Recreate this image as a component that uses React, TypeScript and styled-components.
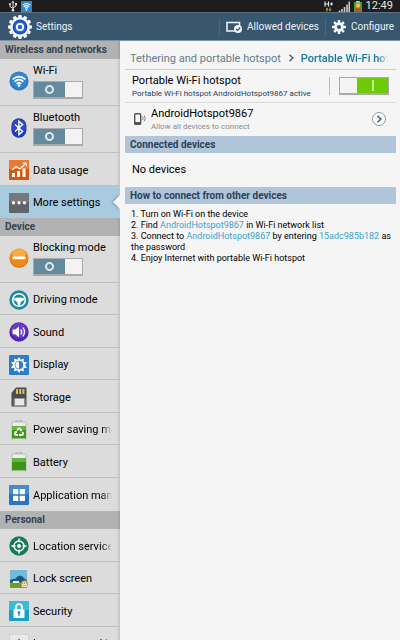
import React from "react";
import styled, { createGlobalStyle, css } from "styled-components";

const GlobalStyle = createGlobalStyle`
  * { box-sizing: border-box; }
  html, body { margin: 0; background: #f5f5f5; }
  body { font-family: Roboto, "Noto Sans", sans-serif; color: #000; overflow: hidden; }
  button, input { font: inherit; margin: 0; padding: 0; }
  a { color: inherit; text-decoration: none; }
  svg { display: block; flex: none; }
`;

const Screen = styled.div`
  display: flex;
  flex-direction: column;
  height: 100vh;
`;

const StatusBar = styled.div`
  display: flex;
  align-items: center;
  gap: 4px;
  height: 12px;
  padding: 0 7px 0 9px;
  background: #1d1d1d;
  color: #e4e4e4;
  font-size: 11px;
  line-height: 12px;
`;

const Spacer = styled.div`
  flex: 1;
`;

const ActionBar = styled.header`
  display: flex;
  align-items: center;
  height: 29px;
  padding-left: 8px;
  background: #39566f;
  border-top: 1px solid #5a7287;
  border-bottom: 1px solid #8094a6;
  color: #eef2f5;
`;

const Title = styled.h1`
  flex: 1;
  margin: 0 0 0 4px;
  font-size: 10px;
  font-weight: 400;
`;

const Action = styled.button`
  display: flex;
  align-items: center;
  gap: 5px;
  height: 18px;
  padding: 0 6px;
  border: 0;
  border-left: 1px solid #4b677f;
  background: none;
  color: inherit;
  font-size: 10px;
`;

const Body = styled.div`
  display: flex;
  flex: 1;
  min-height: 0;
`;

const Sidebar = styled.nav`
  width: 30%;
  flex: none;
  overflow: hidden;
  background: linear-gradient(to right, #dcdcdc 97%, #c4c4c4);
`;

const GroupTitle = styled.h2`
  height: 18px;
  margin: 0;
  padding-left: 5px;
  background: linear-gradient(to right, #b2b2b2 97%, #9f9f9f);
  color: #33434f;
  font-size: 10px;
  font-weight: 700;
  line-height: 18px;
`;

const Group = styled.ul`
  margin: 0;
  padding: 0;
  list-style: none;
`;

const Item = styled.li<{ $selected?: boolean; $tall?: boolean }>`
  position: relative;
  display: flex;
  align-items: center;
  gap: 4px;
  height: 32px;
  padding: 2px 8px 0 9px;
  border-bottom: 1px solid #c0c0c0;
  &:nth-child(odd), &:nth-child(8) { height: 33px; }
  &:last-child { border-bottom-color: transparent; }
  ${(p) => p.$tall && css`
    &&, &&:nth-child(odd) { height: 47px; padding-top: 0; padding-bottom: 2px; }
  `}
  ${(p) => p.$selected && css`
    background: #a9cbe0;
    &::after {
      content: "";
      position: absolute;
      right: 0;
      top: 9px;
      border: 7px solid transparent;
      border-left-width: 0;
      border-right-color: #f5f5f5;
      filter: drop-shadow(-1px 0 1px #6f8b9c);
    }
  `}
`;

const ItemText = styled.div`
  display: flex;
  flex: 1;
  min-width: 0;
  flex-direction: column;
  align-items: flex-start;
  gap: 3px;
`;

const fade = css`
  overflow: hidden;
  white-space: nowrap;
  mask-image: linear-gradient(to left, transparent, #000 10px);
`;

const ItemLink = styled.a<{ $fade?: boolean }>`
  max-width: 100%;
  font-size: 11px;
  line-height: 15px;
  white-space: nowrap;
  ${(p) => p.$fade && fade}
`;

const Switch = styled.input`
  appearance: none;
  display: flex;
  flex: none;
  width: 50px;
  height: 18px;
  border: 1px solid #a9a9a9;
  border-width: 1px 1px 2px;
  background: #f3f3f3;
  &::before {
    content: "";
    width: 31px;
    background:
      radial-gradient(circle at center, transparent 2px, #dbe6ec 3px, #dbe6ec 4px, transparent 5px),
      #648a9e;
  }
  &:checked { justify-content: flex-end; }
  &:checked::before {
    background:
      linear-gradient(#c4f28c, #c4f28c) center / 2px 11px no-repeat,
      #6ccb06;
  }
`;

const Main = styled.main`
  flex: 1;
  min-width: 0;
  padding: 0 4px 0 5px;
  background: #f5f5f5;
`;

const Crumbs = styled.div`
  display: flex;
  align-items: center;
  gap: 6px;
  height: 29px;
  padding: 6px 8px 0 5px;
  border-bottom: 1px solid #c3d1d3;
  color: #647d89;
  font-size: 11px;
`;

const Crumb = styled.a`
  flex: none;
`;

const CurrentCrumb = styled.span`
  flex: 1;
  color: #1677a5;
  font-weight: 500;
  ${fade}
`;

const Row = styled.div<{ $last?: boolean }>`
  display: flex;
  align-items: center;
  height: 33px;
  padding: 0 7px;
  border-bottom: 1px solid ${(p) => (p.$last ? "transparent" : "#dcdcdc")};
`;

const RowText = styled.div<{ $inset?: boolean }>`
  display: flex;
  flex: 1;
  min-width: 0;
  flex-direction: column;
  padding-left: ${(p) => (p.$inset ? 5 : 0)}px;
`;

const RowTitle = styled.label`
  font-size: 11px;
  line-height: 14px;
  white-space: nowrap;
`;

const RowNote = styled.span<{ $muted?: boolean }>`
  color: ${(p) => (p.$muted ? "#8b8b8b" : "#27425e")};
  font-size: 8px;
  line-height: 11px;
  white-space: nowrap;
`;

const Rule = styled.div`
  width: 1px;
  height: 18px;
  margin-right: 9px;
  background: #bdbdbd;
`;

const Round = styled.button`
  display: grid;
  place-items: center;
  width: 14px;
  height: 14px;
  margin-right: 3px;
  border: 1px solid #8d989e;
  border-radius: 50%;
  background: #fafafa;
`;

const Band = styled.h2`
  height: 17px;
  margin: 0;
  padding-left: 5px;
  background: #b1c5da;
  color: #2b4155;
  font-size: 10px;
  font-weight: 700;
  line-height: 18px;
`;

const Empty = styled.p`
  margin: 0;
  padding-left: 7px;
  font-size: 11px;
  line-height: 34px;
`;

const Steps = styled.ol`
  margin: 0;
  padding: 5px 0 0 6px;
  font-size: 9px;
  line-height: 11px;
  list-style: none;
`;

const Key = styled.span`
  color: #3ba3cf;
`;

const Gear = ({ size, blue }: { size: number; blue?: boolean }) => (
  <svg width={size} height={size} viewBox="-12 -12 24 24" aria-hidden="true">
    {Array.from({ length: blue ? 12 : 8 }, (_, i) => (
      <rect key={i} x={blue ? -1.8 : -2.2} y="-12" width={blue ? 3.6 : 4.4} height="6" rx="1"
        fill="#f3f6f8" transform={`rotate(${i * (blue ? 30 : 45)})`} />
    ))}
    {blue ? (
      <>
        <circle r="10" fill="#f3f6f8" />
        <circle r="7.4" fill="#1c4fc0" />
        <circle r="5.6" fill="#2f66df" />
        <circle r="3.2" fill="none" stroke="#fff" strokeWidth="1.7" />
      </>
    ) : (
      <circle r="5.9" fill="none" stroke="#f3f6f8" strokeWidth="4.6" />
    )}
  </svg>
);

const drawings: Record<string, React.ReactNode> = {
  wifi: (
    <>
      <circle cx="10" cy="10" r="9.6" fill="#2b7ac6" />
      <circle cx="10" cy="9" r="8" fill="#3d8ed8" opacity=".6" />
      <g fill="none" stroke="#fff" strokeWidth="1.6">
        <path d="M3.6 8.3Q10 2.8 16.4 8.3M5.6 10.6Q10 6.8 14.4 10.6M7.6 12.8Q10 10.8 12.4 12.8" />
      </g>
      <circle cx="10" cy="14.6" r="1.3" fill="#fff" />
    </>
  ),
  bluetooth: (
    <>
      <rect x="2.4" y="0.2" width="15" height="19.6" rx="7.5" fill="#2338b4" />
      <rect x="3.4" y="1" width="13" height="15" rx="6.5" fill="#3b55d2" opacity=".6" />
      <path d="M6 6.5l7.6 7-3.7 3.2V3.3l3.7 3.2-7.6 7" fill="none" stroke="#fff" strokeWidth="1.4" />
    </>
  ),
  data: (
    <>
      <rect width="20" height="20" rx="1" fill="#d9560f" />
      <rect width="20" height="9" rx="1" fill="#ec7a35" />
      <path d="M3 10l4-3.5 4 2.5 6-6" fill="none" stroke="#fff" strokeWidth="1.2" />
      <path d="M14 3h3.3v3.3" fill="none" stroke="#fff" />
      <path d="M3 17v-4h3v4zM8 17v-6h3v6zM13.5 17V8.5h3V17z" fill="#fff" />
    </>
  ),
  more: (
    <>
      <rect width="20" height="20" rx="1" fill="#626369" />
      <rect width="20" height="9" rx="1" fill="#77787d" />
      <g fill="#fff">
        <circle cx="4.5" cy="9.7" r="1.7" />
        <circle cx="10" cy="9.7" r="1.7" />
        <circle cx="15.5" cy="9.7" r="1.7" />
      </g>
    </>
  ),
  blocking: (
    <>
      <circle cx="10" cy="10.4" r="9.4" fill="#b56708" />
      <circle cx="10" cy="9.7" r="9.2" fill="#f18a15" />
      <ellipse cx="10" cy="5.6" rx="7" ry="4.5" fill="#fbb14b" opacity=".8" />
      <rect x="3.5" y="8.5" width="13" height="2.8" rx="1" fill="#fff" />
    </>
  ),
  driving: (
    <>
      <circle cx="10" cy="10" r="9.7" fill="#198aa0" />
      <circle cx="10" cy="10" r="6.3" fill="none" stroke="#fff" strokeWidth="1.6" />
      <path d="M4.5 8.5Q10 6.5 15.5 8.5L14.5 10.5Q11.5 11 11 15.500H9Q8.500 11 5.500 10.500Z" fill="#fff" />
    </>
  ),
  sound: (
    <>
      <circle cx="10" cy="10" r="9.7" fill="#5126b4" />
      <circle cx="10" cy="8.5" r="7.5" fill="#7a4ade" opacity=".6" />
      <path d="M3.6 7.6h2.7L10 4.6v10.6l-3.7-3H3.6z" fill="#fff" />
      <path d="M11.8 7.3q1.7 2.6 0 5.2M14 5.5q3 4.4 0 8.8" fill="none" stroke="#fff" strokeWidth="1.3" />
    </>
  ),
  display: (
    <>
      <rect width="20" height="20" rx="1" fill="#2f7cc6" />
      <path d="M10 2l1.7 2.8 3.1-1.2-.2 3.3 3.4.4-2 2.7 2 2.7-3.4.4.2 3.3-3.1-1.2L10 18l-1.7-2.8-3.1 1.2.2-3.3-3.4-.4 2-2.7-2-2.7 3.4-.4-.2-3.3 3.1 1.2z" fill="#fff" />
      <path d="M10 6a4 4 0 0 1 0 8z" fill="#2f7cc6" />
      <circle cx="10" cy="10" r="4" fill="none" stroke="#2f7cc6" strokeWidth=".7" />
    </>
  ),
  storage: (
    <>
      <path d="M7 .5h10.5v19H2.5V6z" fill="#4b4b4d" />
      <path d="M7 2h2v5H7zM10.2 2h2v5h-2zM13.4 2h2v5h-2z" fill="#dcc24a" />
      <path d="M5.5 11.5h10v7h-10z" fill="#e9e9e9" />
      <path d="M4.5 11.5H6v8H4.5zM15 11.5h1.5v8H15z" fill="#8b8b8b" />
    </>
  ),
  battery: (
    <>
      <rect x="7" y="0" width="6" height="3" fill="#c9cdd0" stroke="#999" strokeWidth=".5" />
      <rect x="3" y="2" width="14" height="18" rx="1" fill="#eceeee" stroke="#a3a8a6" strokeWidth=".6" />
      <rect x="3" y="6" width="14" height="12.5" fill="#3d9417" />
      <rect x="3" y="6" width="14" height="4" fill="#63b637" />
    </>
  ),
  apps: (
    <>
      <rect width="20" height="20" rx="1" fill="#2d74be" />
      <rect width="20" height="9" rx="1" fill="#468ad0" />
      <path d="M4 4h5.3v5.3H4zM10.7 4H16v5.3h-5.3zM4 10.7h5.3V16H4zM10.7 10.7H16V16h-5.3z" fill="#fff" />
    </>
  ),
  location: (
    <>
      <circle cx="10" cy="10" r="9.7" fill="#167a59" />
      <circle cx="10" cy="10" r="5" fill="none" stroke="#fff" strokeWidth="1.5" />
      <circle cx="10" cy="10" r="2" fill="#fff" />
      <path d="M10 2.5v4M10 13.5v4M2.5 10h4M13.5 10h4" stroke="#fff" strokeWidth="1.5" />
    </>
  ),
  lock: (
    <>
      <rect x=".5" y="1" width="18" height="18" fill="#3b8fb9" stroke="#e5edf0" strokeWidth=".7" />
      <rect x="1" y="1.5" width="17" height="9" fill="#73bcd9" />
      <path d="M1 12q3-3 5-2 4-6 8-2l4 4v5H1z" fill="#1f567a" />
      <path d="M1 14q4-3 9-1l8 2v4H1z" fill="#6d9d2d" />
      <path d="M4 12h6v2H4z" fill="#e8eef0" />
      <circle cx="15.5" cy="15" r="3.5" fill="#c99a52" />
      <path d="M13.5 15.5h4v2h-4zM14.3 15v-1.2a1.2 1.2 0 0 1 2.4 0V15" fill="none" stroke="#fff1d4" strokeWidth=".9" />
    </>
  ),
  security: (
    <>
      <rect width="20" height="20" rx="1" fill="#17a3c8" />
      <rect width="20" height="9" rx="1" fill="#3dbad8" />
      <path d="M7 9V6.2a3 3 0 0 1 6 0V9" fill="none" stroke="#fff" strokeWidth="1.8" />
      <rect x="4.5" y="8.3" width="11" height="8.7" rx=".8" fill="#fff" />
      <circle cx="10" cy="11.6" r="1.5" fill="#17a3c8" />
      <path d="M9.3 12h1.4v3.2H9.3z" fill="#17a3c8" />
    </>
  ),
  language: (
    <>
      <rect width="20" height="20" rx="1" fill="#e9e9e9" stroke="#bcbcbc" />
      <path d="M10 4l5 12h-2.5l-1-3h-3l-1 3H5z" fill="#3f3f3f" />
    </>
  ),
};
drawings.power = (
  <>
    {drawings.battery}
    <g fill="none" stroke="#fff" strokeWidth="1.6">
      <path d="M8.2 10.5L9.5 8.3h1.2l1.4 2.2M13.3 11.8l1 1.9-.7 1.2h-2.8M9 14.9H6.4l-.7-1.2 1.1-1.9" />
    </g>
    <path d="M12.9 9l-.2 2.7-2.2-1.2zM11.3 13.2v3.3L9.5 14.9zM5.2 11.5l2.5-.7.3 2.6z" fill="#fff" />
  </>
);

const Icon = ({ name }: { name: string }) => (
  <svg width="20" height="20" viewBox="0 0 20 20" aria-hidden="true">{drawings[name]}</svg>
);

type Entry = { icon: string; text: string; toggle?: boolean; selected?: boolean; fade?: boolean };

const groups: { title: string; items: Entry[] }[] = [
  {
    title: "Wireless and networks",
    items: [
      { icon: "wifi", text: "Wi-Fi", toggle: true },
      { icon: "bluetooth", text: "Bluetooth", toggle: true },
      { icon: "data", text: "Data usage" },
      { icon: "more", text: "More settings", selected: true },
    ],
  },
  {
    title: "Device",
    items: [
      { icon: "blocking", text: "Blocking mode", toggle: true },
      { icon: "driving", text: "Driving mode" },
      { icon: "sound", text: "Sound" },
      { icon: "display", text: "Display" },
      { icon: "storage", text: "Storage" },
      { icon: "power", text: "Power saving mode", fade: true },
      { icon: "battery", text: "Battery" },
      { icon: "apps", text: "Application manager", fade: true },
    ],
  },
  {
    title: "Personal",
    items: [
      { icon: "location", text: "Location services", fade: true },
      { icon: "lock", text: "Lock screen" },
      { icon: "security", text: "Security" },
      { icon: "language", text: "Language and input", fade: true },
    ],
  },
];

const Chevron = ({ color, size }: { color: string; size: number }) => (
  <svg width={size} height={size} viewBox="0 0 8 8" aria-hidden="true">
    <path d="M2.5 .8L5.8 4 2.5 7.2" fill="none" stroke={color} strokeWidth="1.6" />
  </svg>
);

export default function App() {
  return (
    <Screen>
      <GlobalStyle />
      <StatusBar>
        <svg width="8" height="12" viewBox="0 0 8 12" aria-label="USB">
          <path d="M4 2v8M1 4v2.5L4 8.5M7 3.5V6L4 8" fill="none" stroke="#e4e4e4" />
          <path d="M4 .5l1.5 2.3h-3zM6 3h2v2H6z" fill="#e4e4e4" />
          <circle cx="1" cy="4" r="1" fill="#e4e4e4" />
          <circle cx="4" cy="10.2" r="1.3" fill="#e4e4e4" />
        </svg>
        <svg width="11" height="11" viewBox="0 0 20 20" aria-label="Wi-Fi available">
          <rect width="20" height="20" fill="#2f87cb" />
          <path d="M2.5 7.5Q10 1.5 17.5 7.5M5 10.5Q10 6.5 15 10.5M7.3 13.2Q10 11 12.7 13.2" fill="none" stroke="#fff" strokeWidth="2" />
          <circle cx="10" cy="16" r="1.6" fill="#fff" />
        </svg>
        <Spacer />
        <svg width="10" height="11" viewBox="0 0 10 11" aria-label="H+ data">
          <path d="M1 .5v5M4.5 .5v5M1 3h3.5M6 3h3M7.5 1.5v3" stroke="#e4e4e4" strokeWidth="1.2" />
          <path d="M3 6.5l1.5 2h-1v2h-1v-2h-1z" fill="#e39a2c" />
          <path d="M6 10.5l-1.5-2h1v-2h1v2h1z" fill="#7cc43a" />
        </svg>
        <svg width="12" height="11" viewBox="0 0 12 11" aria-label="Signal">
          <path d="M1.5 11V9.5M4 11V8M6.5 11V6M9 11V3.5M11.3 11V.5" stroke="#cfcfcf" strokeWidth="1.6" />
        </svg>
        <svg width="8" height="11" viewBox="0 0 8 11" aria-label="Battery">
          <rect x="0" y="1" width="8" height="10" fill="#4b9a2b" />
          <rect x="2" y="0" width="4" height="2" fill="#a7b5a2" />
          <circle cx="4" cy="4.5" r="2.2" fill="#e9c34b" />
          <path d="M1 11q0-4 3-4t3 4z" fill="#d0432f" />
        </svg>
        <span>12:49</span>
      </StatusBar>

      <ActionBar>
        <Gear size={24} blue />
        <Title>Settings</Title>
        <Action type="button">
          <svg width="16" height="12" viewBox="0 0 16 12" aria-hidden="true">
            <path d="M9 10H1V1.5h12.5V5" fill="none" stroke="#f3f6f8" strokeWidth="1.5" />
            <circle cx="12" cy="8" r="4" fill="#f3f6f8" />
            <path d="M10 8l1.5 1.5 2.7-3" fill="none" stroke="#39566f" strokeWidth="1.2" />
          </svg>
          Allowed devices
        </Action>
        <Action type="button">
          <Gear size={14} />
          Configure
        </Action>
      </ActionBar>

      <Body>
        <Sidebar>
          {groups.map((g) => (
            <section key={g.title}>
              <GroupTitle>{g.title}</GroupTitle>
              <Group>
                {g.items.map((i) => (
                  <Item key={i.text} $tall={i.toggle} $selected={i.selected}>
                    <Icon name={i.icon} />
                    <ItemText>
                      <ItemLink href="#" $fade={i.fade}>{i.text}</ItemLink>
                      {i.toggle && <Switch type="checkbox" role="switch" aria-label={i.text} />}
                    </ItemText>
                  </Item>
                ))}
              </Group>
            </section>
          ))}
        </Sidebar>

        <Main>
          <Crumbs>
            <Crumb href="#">Tethering and portable hotspot</Crumb>
            <Chevron color="#4d6b7c" size={8} />
            <CurrentCrumb>Portable Wi-Fi hotspot</CurrentCrumb>
          </Crumbs>
          <Row>
            <RowText>
              <RowTitle htmlFor="hotspot">Portable Wi-Fi hotspot</RowTitle>
              <RowNote>Portable Wi-Fi hotspot AndroidHotspot9867 active</RowNote>
            </RowText>
            <Rule />
            <Switch id="hotspot" type="checkbox" role="switch" defaultChecked />
          </Row>
          <Row $last>
            <svg width="14" height="14" viewBox="0 0 14 14" aria-hidden="true">
              <rect x="2.7" y="1.7" width="6" height="10.6" rx="1" fill="none" stroke="#555" strokeWidth="1.4" />
              <path d="M2.5 10H9v2.5H2.5z" fill="#555" />
              <path d="M10.5 4.5q1.3 1.8 0 3.6M12.2 3.3q2 3 0 6" fill="none" stroke="#777" strokeWidth=".9" />
            </svg>
            <RowText $inset>
              <RowTitle htmlFor="device">AndroidHotspot9867</RowTitle>
              <RowNote $muted>Allow all devices to connect</RowNote>
            </RowText>
            <Round id="device" type="button"><Chevron color="#3f6880" size={8} /></Round>
          </Row>
          <Band>Connected devices</Band>
          <Empty>No devices</Empty>
          <Band>How to connect from other devices</Band>
          <Steps>
            <li>1. Turn on Wi-Fi on the device</li>
            <li>2. Find <Key>AndroidHotspot9867</Key> in Wi-Fi network list</li>
            <li>3. Connect to <Key>AndroidHotspot9867</Key> by entering <Key>15adc985b182</Key> as the password</li>
            <li>4. Enjoy Internet with portable Wi-Fi hotspot</li>
          </Steps>
        </Main>
      </Body>
    </Screen>
  );
}
